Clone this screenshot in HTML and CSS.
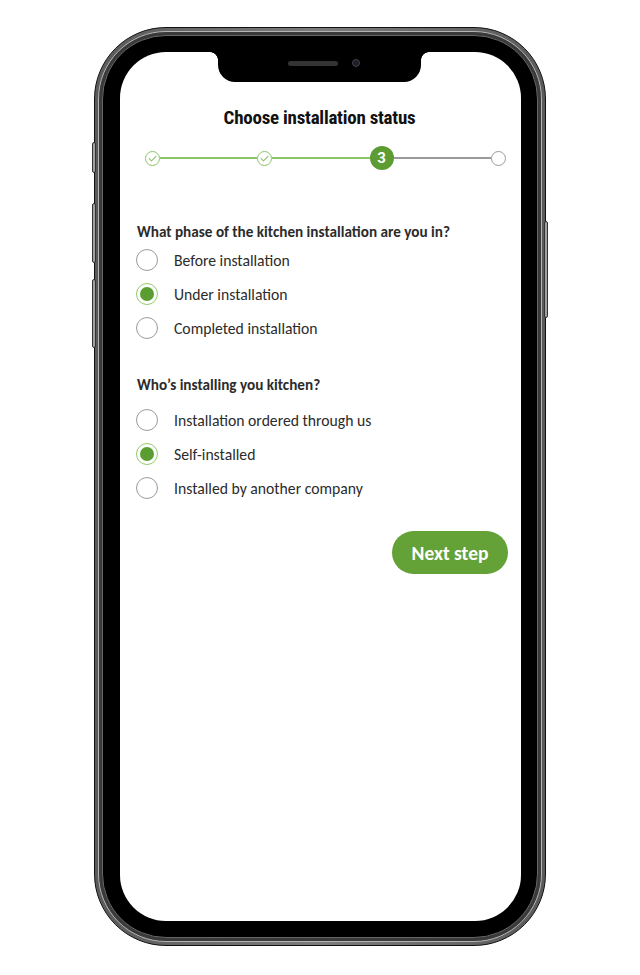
FILE: index.html
```html
<!DOCTYPE html>
<html lang="en">
<head>
<meta charset="utf-8">
<title>Choose installation status</title>
<link rel="stylesheet" href="styles.css">
</head>
<body>
<div class="stage">
  <div class="phone">
    <span class="btn btn-l1"></span>
    <span class="btn btn-l2"></span>
    <span class="btn btn-l3"></span>
    <span class="btn btn-r1"></span>
    <div class="rim">
      <div class="bezel">
        <div class="screen">
          <div class="notch">
            <span class="speaker"></span>
            <span class="camera"></span>
          </div>

          <h1 class="title">Choose installation status</h1>

          <div class="stepper">
            <span class="step done">
              <svg viewBox="0 0 16 16" width="11" height="11"><path d="M3 8.3 L6.5 11.5 L13 4.8" fill="none" stroke="#8cc46a" stroke-width="1.6" stroke-linecap="round" stroke-linejoin="round"/></svg>
            </span>
            <span class="line green"></span>
            <span class="step done">
              <svg viewBox="0 0 16 16" width="11" height="11"><path d="M3 8.3 L6.5 11.5 L13 4.8" fill="none" stroke="#8cc46a" stroke-width="1.6" stroke-linecap="round" stroke-linejoin="round"/></svg>
            </span>
            <span class="line green"></span>
            <span class="step current">3</span>
            <span class="line grey"></span>
            <span class="step todo"></span>
          </div>

          <div class="question">What phase of the kitchen installation are you in?</div>
          <div class="group">
            <div class="option"><span class="radio"></span><span class="label">Before installation</span></div>
            <div class="option"><span class="radio checked"></span><span class="label">Under installation</span></div>
            <div class="option"><span class="radio"></span><span class="label">Completed installation</span></div>
          </div>

          <div class="question question-second">Who’s installing you kitchen?</div>
          <div class="group">
            <div class="option"><span class="radio"></span><span class="label">Installation ordered through us</span></div>
            <div class="option"><span class="radio checked"></span><span class="label">Self-installed</span></div>
            <div class="option"><span class="radio"></span><span class="label">Installed by another company</span></div>
          </div>

          <div class="actions">
            <button class="next">Next step</button>
          </div>
        </div>
      </div>
    </div>
  </div>
</div>
</body>
</html>
```
FILE: styles.css
```css
* { box-sizing: border-box; }
html, body { margin: 0; padding: 0; background: #fff; }
body { width: 640px; height: 975px; overflow: hidden; font-family: "Carlito", "Calibri", "Lato", "Liberation Sans", sans-serif; color: #2b2b2b; }

.stage { padding: 27px 0 0 94px; }

.phone {
  position: relative;
  width: 452px;
  height: 919px;
  border-radius: 72px;
  background: linear-gradient(90deg, #5a5a5a, #7c7c7c 50%, #5a5a5a);
  border: 1px solid #111;
  padding: 3px;
}
.rim {
  height: 100%;
  border-radius: 68px;
  border: 1px solid #b4b4b4;
  background: #3a3a3a;
  padding: 3px;
}
.bezel {
  height: 100%;
  border-radius: 64px;
  background: #000;
  border: 1px solid #666;
  padding: 16px 16px 16px 17px;
}
.screen {
  position: relative;
  height: 100%;
  background: #fff;
  border-radius: 46px;
  padding: 55px 13px 0 17px;
}

.btn { position: absolute; background: linear-gradient(90deg, #777, #c8c8c8, #777); border: 1px solid #333; border-radius: 2px; width: 4px; }
.btn-l1 { left: -3px; top: 114px; height: 31px; }
.btn-l2 { left: -3px; top: 175px; height: 60px; }
.btn-l3 { left: -3px; top: 251px; height: 69px; }
.btn-r1 { right: -3px; top: 193px; height: 97px; }

.notch {
  position: absolute;
  top: 0;
  left: 98px;
  width: 203px;
  height: 30px;
  background: #000;
  border-radius: 0 0 17px 17px;
  display: flex;
  align-items: center;
  justify-content: center;
  gap: 14px;
  padding-bottom: 8px;
}
.notch::before, .notch::after {
  content: "";
  position: absolute;
  top: 0;
  width: 8px;
  height: 8px;
}
.notch::before { left: -8px; background: radial-gradient(circle at 0 100%, transparent 7.5px, #000 8px); }
.notch::after { right: -8px; background: radial-gradient(circle at 100% 100%, transparent 7.5px, #000 8px); }
.speaker { width: 50px; height: 5px; border-radius: 3px; background: #333; margin-left: 8px; }
.camera { width: 8px; height: 8px; border-radius: 50%; background: #1c1c2a; border: 1px solid #444; }

.title {
  margin: 0;
  text-align: center;
  font-family: "Liberation Sans Narrow", "Roboto Condensed", "Roboto", "Liberation Sans", sans-serif;
  font-weight: 700;
  font-size: 19px;
  line-height: 22px;
  letter-spacing: -0.25px;
  color: #111;
  padding-right: 6px;
}

.stepper {
  display: flex;
  align-items: center;
  margin: 17px 2px 52px 8px;
  height: 24px;
}
.step {
  flex: none;
  display: flex;
  align-items: center;
  justify-content: center;
  border-radius: 50%;
}
.step.done { width: 15px; height: 15px; border: 1.5px solid #8cc46a; background: #fff; }
.step.current { width: 24px; height: 24px; background: #5c9c33; color: #fff; font-family: "Roboto", "Liberation Sans", sans-serif; font-weight: 700; font-size: 15px; }
.step.todo { width: 15px; height: 15px; border: 1.5px solid #9a9a9a; background: #fff; }
.line { flex: 1; height: 2px; }
.line.green { background: #8cc46a; }
.line.grey { background: #9a9a9a; }

.question {
  font-weight: 700;
  font-size: 15.2px;
  line-height: 20px;
  color: #2b2b2b;
  margin-bottom: 1px;
}
.question-second { margin-top: 7px; margin-bottom: 8px; }
.group { margin-bottom: 30px; }
.option {
  display: flex;
  align-items: center;
  height: 34px;
  gap: 16px;
}
.radio {
  flex: none;
  width: 22px;
  height: 22px;
  margin-left: -1px;
  border-radius: 50%;
  border: 1.5px solid #9a9a9a;
  background: #fff;
  display: flex;
  align-items: center;
  justify-content: center;
}
.radio.checked { border-color: #8fcb6e; }
.radio.checked::after { content: ""; width: 14px; height: 14px; border-radius: 50%; background: #5a9e31; }
.label { font-size: 15.7px; color: #2b2b2b; }

.actions { display: flex; justify-content: flex-end; margin-top: -4px; }
.next {
  width: 116px;
  height: 43px;
  border: none;
  border-radius: 22px;
  background: #64a137;
  color: #fff;
  font-family: inherit;
  font-weight: 700;
  font-size: 19.5px;
  padding: 0;
}
```
